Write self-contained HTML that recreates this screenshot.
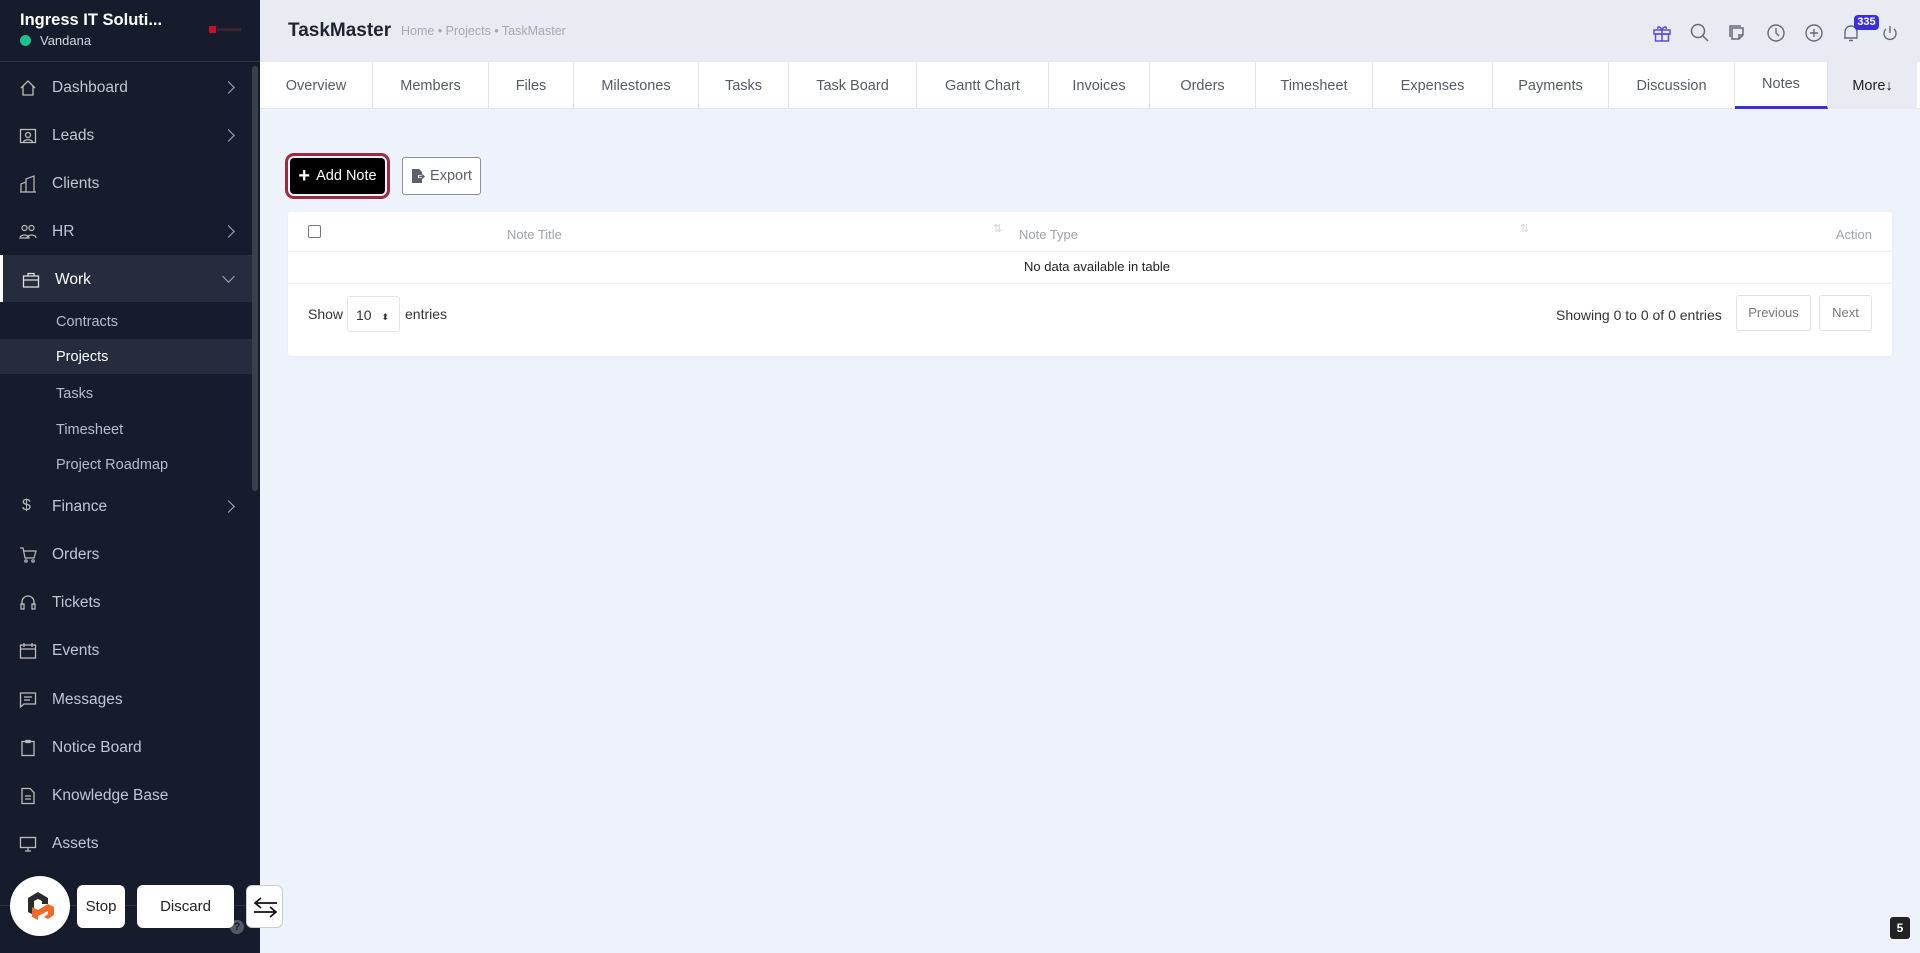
<!DOCTYPE html>
<html><head><meta charset="utf-8"><style>
*{box-sizing:border-box;margin:0;padding:0}
body{width:1920px;height:953px;overflow:hidden;background:#eef2fb;font-family:"Liberation Sans",Arial,sans-serif;position:relative}
.sb{position:absolute;left:0;top:0;width:260px;height:953px;background:#171c2d;color:#c9ccd6}
.sbh{position:absolute;left:0;top:0;width:260px;height:62px;border-bottom:1px solid #2c3244}
.mi{position:absolute;left:0;width:250px;height:48px;display:flex;align-items:center;font-size:15.5px;color:#c3c6d0}
.mi .ic{position:absolute;left:19px;width:18px;height:18px}
.mi .t{position:absolute;left:52px}
.mi .ch{position:absolute;left:224px;top:19px;width:9px;height:9px;border-right:1.6px solid #aab;border-top:1.6px solid #aab;transform:rotate(45deg)}
.sub{position:absolute;left:56px;font-size:14.5px;color:#b9bcc7}
.hdr{position:absolute;left:260px;top:0;right:0;height:62px;background:#e9ebf2}
.tabs{position:absolute;left:260px;top:62px;right:0;height:47px;background:#fff;border-bottom:1px solid #e3e6ee}
.tab{position:absolute;top:0;height:47px;display:flex;align-items:center;justify-content:center;font-size:14.5px;color:#555b66;border-right:1px solid #e3e6ee}
.card{position:absolute;left:288px;top:212px;width:1604px;height:144px;background:#fff;border-radius:3px;box-shadow:0 1px 2px rgba(0,0,0,.04)}
.hi{position:absolute;top:22px;width:22px;height:22px}
</style></head><body>
<div class="sb">
 <div class="sbh">
  <div style="position:absolute;left:20px;top:11px;font-size:16.5px;font-weight:bold;color:#fff">Ingress IT Soluti...</div>
  <div style="position:absolute;left:20px;top:35px;width:11px;height:11px;border-radius:50%;background:#1fbf8f"></div>
  <div style="position:absolute;left:40px;top:33px;font-size:13px;color:#d5d7de">Vandana</div>
  <div style="position:absolute;left:209px;top:26px;width:7px;height:7px;background:#c8102e"></div>
  <div style="position:absolute;left:217px;top:28px;width:24px;height:3px;background:#3a2230"></div>
 </div>
 <div style="position:absolute;left:252px;top:66px;width:6px;height:425px;background:#3a3f4c;border-radius:3px"></div>
 <div class="mi" style="top:64px"><svg class="ic" viewBox="0 0 18 18" fill="none" stroke="#bbb" stroke-width="1.3"><path d="M2 9L9 2l7 7M4 7v9h10V7"/></svg><span class="t">Dashboard</span><span class="ch"></span></div>
 <div class="mi" style="top:112px"><svg class="ic" viewBox="0 0 18 18" fill="none" stroke="#bbb" stroke-width="1.3"><rect x="1.5" y="2.5" width="15" height="13"/><circle cx="9" cy="8" r="2.5"/><path d="M4.5 15c1-3 8-3 9 0"/></svg><span class="t">Leads</span><span class="ch"></span></div>
 <div class="mi" style="top:160px"><svg class="ic" viewBox="0 0 18 18" fill="none" stroke="#bbb" stroke-width="1.2"><path d="M2 17V9l5-2v10M7 17V4l8-3v16M1 17h16"/></svg><span class="t">Clients</span></div>
 <div class="mi" style="top:208px"><svg class="ic" viewBox="0 0 18 18" fill="none" stroke="#bbb" stroke-width="1.2"><circle cx="5.5" cy="5" r="2.5"/><circle cx="12.5" cy="5" r="2.5"/><path d="M1 15c0-4 9-4 9 0zM8 15c0-4 9-4 9 0"/></svg><span class="t">HR</span><span class="ch"></span></div>
 <div style="position:absolute;left:0;top:255px;width:252px;height:47px;background:#262c3e"></div>
 <div style="position:absolute;left:0;top:255px;width:3px;height:47px;background:#fff"></div>
 <div class="mi" style="top:256px;height:47px;color:#fff"><svg class="ic" viewBox="0 0 18 18" fill="none" stroke="#ddd" stroke-width="1.3" style="left:22px"><rect x="1.5" y="5" width="15" height="11"/><path d="M6 5V2.5h6V5M1.5 9h15"/></svg><span class="t" style="left:55px">Work</span><span class="ch" style="transform:rotate(135deg);top:16px"></span></div>
 <div style="position:absolute;left:0;top:339px;width:252px;height:35px;background:#262c3e"></div>
 <div class="sub" style="top:314px">Contracts</div>
 <div class="sub" style="top:349px;color:#fff">Projects</div>
 <div class="sub" style="top:386px">Tasks</div>
 <div class="sub" style="top:422px">Timesheet</div>
 <div class="sub" style="top:457px">Project Roadmap</div>
 <div class="mi" style="top:483px"><span class="ic" style="font-size:16px;color:#bbb;left:22px;top:14px">$</span><span class="t">Finance</span><span class="ch"></span></div>
 <div class="mi" style="top:531px"><svg class="ic" viewBox="0 0 18 18" fill="none" stroke="#bbb" stroke-width="1.2"><path d="M1 2h3l2 10h9l2-7H5"/><circle cx="7" cy="15" r="1.2"/><circle cx="14" cy="15" r="1.2"/></svg><span class="t">Orders</span></div>
 <div class="mi" style="top:579px"><svg class="ic" viewBox="0 0 18 18" fill="none" stroke="#bbb" stroke-width="1.3"><path d="M3 11V8a6 6 0 0112 0v3"/><rect x="2" y="10" width="3" height="5"/><rect x="13" y="10" width="3" height="5"/></svg><span class="t">Tickets</span></div>
 <div class="mi" style="top:627px"><svg class="ic" viewBox="0 0 18 18" fill="none" stroke="#bbb" stroke-width="1.3"><rect x="1.5" y="3" width="15" height="13"/><path d="M1.5 7h15M5 1v4M13 1v4"/></svg><span class="t">Events</span></div>
 <div class="mi" style="top:676px"><svg class="ic" viewBox="0 0 18 18" fill="none" stroke="#bbb" stroke-width="1.3"><path d="M1.5 2h15v11H5l-3.5 3z"/><path d="M5 6h8M5 9h6"/></svg><span class="t">Messages</span></div>
 <div class="mi" style="top:724px"><svg class="ic" viewBox="0 0 18 18" fill="none" stroke="#bbb" stroke-width="1.3"><rect x="3" y="2.5" width="12" height="14"/><path d="M7 1.5h4v2H7z"/></svg><span class="t">Notice Board</span></div>
 <div class="mi" style="top:772px"><svg class="ic" viewBox="0 0 18 18" fill="none" stroke="#bbb" stroke-width="1.3"><path d="M3 1.5h8l4 4v11H3z"/><path d="M6 9h6M6 12h6"/></svg><span class="t">Knowledge Base</span></div>
 <div class="mi" style="top:820px"><svg class="ic" viewBox="0 0 18 18" fill="none" stroke="#bbb" stroke-width="1.3"><rect x="1.5" y="2.5" width="15" height="10"/><path d="M6 16h6M9 12.5V16"/></svg><span class="t">Assets</span></div>
 <div style="position:absolute;left:0;top:905px;width:252px;height:1px;background:#2c3244"></div>
 <div style="position:absolute;left:230px;top:920px;width:14px;height:14px;border-radius:50%;background:#555a66;color:#171c2d;font-size:11px;font-weight:bold;text-align:center;line-height:14px">?</div>
</div>

<div class="hdr">
 <div style="position:absolute;left:28px;top:20px;font-size:19px;font-weight:bold;color:#1f2430">TaskMaster</div>
 <div style="position:absolute;left:141px;top:24px;font-size:12.5px;color:#a3a8b4">Home • Projects • TaskMaster</div>
</div>
<svg class="hi" style="left:1651px" viewBox="0 0 22 22" fill="none" stroke="#5b4bd6" stroke-width="1.5"><rect x="3" y="8" width="16" height="4"/><rect x="4.5" y="12" width="13" height="7"/><path d="M11 8v11M11 8C9 4 6 4 7 7M11 8c2-4 5-4 4-1"/></svg>
<svg class="hi" style="left:1689px" viewBox="0 0 22 22" fill="none" stroke="#666b77" stroke-width="1.5"><circle cx="9" cy="9" r="6.5"/><path d="M14 14l5 5"/></svg>
<svg class="hi" style="left:1727px" viewBox="0 0 22 22" fill="none" stroke="#666b77" stroke-width="1.5"><path d="M5 6h11v7l-4 4H5z"/><path d="M3 15V4h11M12 17v-4h4"/></svg>
<svg class="hi" style="left:1765px" viewBox="0 0 22 22" fill="none" stroke="#666b77" stroke-width="1.4"><circle cx="11" cy="11" r="8"/><path d="M11 6v5l3 3"/></svg>
<svg class="hi" style="left:1803px" viewBox="0 0 22 22" fill="none" stroke="#666b77" stroke-width="1.4"><circle cx="11" cy="11" r="8"/><path d="M11 7v8M7 11h8"/></svg>
<svg class="hi" style="left:1840px" viewBox="0 0 22 22" fill="none" stroke="#666b77" stroke-width="1.4"><path d="M5 16V10a6 6 0 0112 0v6H4M9 18.5h4"/></svg>
<div style="position:absolute;left:1854px;top:15px;width:25px;height:15px;background:#3b2fd6;border-radius:4px;color:#fff;font-size:11px;font-weight:bold;text-align:center;line-height:15px">335</div>
<svg class="hi" style="left:1879px" viewBox="0 0 22 22" fill="none" stroke="#666b77" stroke-width="1.4"><path d="M7 7a6 6 0 108 0M11 4v7"/></svg>

<div class="tabs">
 <div class="tab" style="left:0;width:113px">Overview</div>
 <div class="tab" style="left:113px;width:116px">Members</div>
 <div class="tab" style="left:229px;width:85px">Files</div>
 <div class="tab" style="left:314px;width:125px">Milestones</div>
 <div class="tab" style="left:439px;width:90px">Tasks</div>
 <div class="tab" style="left:529px;width:128px">Task Board</div>
 <div class="tab" style="left:657px;width:132px">Gantt Chart</div>
 <div class="tab" style="left:789px;width:101px">Invoices</div>
 <div class="tab" style="left:890px;width:106px">Orders</div>
 <div class="tab" style="left:996px;width:117px">Timesheet</div>
 <div class="tab" style="left:1113px;width:120px">Expenses</div>
 <div class="tab" style="left:1233px;width:116px">Payments</div>
 <div class="tab" style="left:1349px;width:126px">Discussion</div>
 <div class="tab" style="left:1475px;width:93px;border-bottom:3px solid #3b2fd6">Notes</div>
 <div class="tab" style="left:1568px;width:89px;background:#e9ebf2;color:#222;border:none">More↓</div>
</div>

<div style="position:absolute;left:285px;top:153px;width:105px;height:46px;border:3px solid #9c2a40;border-radius:9px;padding:2px"><div style="width:100%;height:100%;background:#000;border-radius:4px;color:#fff;font-size:14.5px;display:flex;align-items:center;justify-content:center"><span style="font-size:20px;font-weight:bold;margin-right:6px;line-height:1">+</span>Add Note</div></div>
<div style="position:absolute;left:402px;top:157px;width:79px;height:38px;border:1px solid #8a8f99;border-radius:3px;background:#fff;color:#5b606b;font-size:14.5px;display:flex;align-items:center;justify-content:center"><svg width="15" height="16" viewBox="0 0 15 16" style="margin-right:4px"><path d="M1 1h7l3 3v3H7v3h4v5H1z" fill="#5b606b"/><path d="M8 8.5h5M11 6.5l2 2-2 2" stroke="#5b606b" stroke-width="1.4" fill="none"/></svg>Export</div>

<div class="card">
 <div style="position:absolute;left:20px;top:13px;width:13px;height:13px;border:1px solid #777;border-radius:2px"></div>
 <div style="position:absolute;left:219px;top:15px;font-size:13px;color:#9ea3ad">Note Title</div>
 <div style="position:absolute;left:705px;top:10px;font-size:11px;color:#d0d3da">⇅</div>
 <div style="position:absolute;left:731px;top:15px;font-size:13px;color:#9ea3ad">Note Type</div>
 <div style="position:absolute;left:1232px;top:10px;font-size:11px;color:#d0d3da">⇅</div>
 <div style="position:absolute;right:20px;top:15px;font-size:13px;color:#9ea3ad">Action</div>
 <div style="position:absolute;left:0;right:0;top:39px;height:1px;background:#eceef2"></div>
 <div style="position:absolute;left:736px;top:47px;font-size:13px;color:#222">No data available in table</div>
 <div style="position:absolute;left:0;right:0;top:71px;height:1px;background:#eceef2"></div>
 <div style="position:absolute;left:20px;top:94px;font-size:14px;color:#333">Show</div>
 <div style="position:absolute;left:59px;top:84px;width:53px;height:36px;border:1px solid #e2e4e9;border-radius:3px;font-size:14px;color:#333;padding:10px 0 0 8px">10 <span style="font-size:9px;margin-left:6px">⬍</span></div>
 <div style="position:absolute;left:117px;top:94px;font-size:14px;color:#333">entries</div>
 <div style="position:absolute;left:1268px;top:95px;font-size:14px;color:#333">Showing 0 to 0 of 0 entries</div>
 <div style="position:absolute;left:1448px;top:83px;width:75px;height:36px;border:1px solid #dfe1e6;border-radius:3px;font-size:13px;color:#777;text-align:center;line-height:34px">Previous</div>
 <div style="position:absolute;left:1531px;top:83px;width:53px;height:36px;border:1px solid #dfe1e6;border-radius:3px;font-size:13px;color:#777;text-align:center;line-height:34px">Next</div>
</div>

<div style="position:absolute;left:10px;top:876px;width:60px;height:60px;border-radius:50%;background:#fff;box-shadow:0 0 3px rgba(0,0,0,.3)"><svg width="60" height="60" viewBox="0 0 60 60"><path d="M18 22l10-6 10 6v6h-6v-3l-4-2-4 2v14l-6-3z" fill="#2b2b2b"/><path d="M28 44l-6-3 0-10 6 3 10-6 6 3v8l-6 4-4-2 4-3v-3l-4 2-6 3z" fill="#f26a2a"/></svg></div>
<div style="position:absolute;left:77px;top:885px;width:48px;height:43px;background:#fff;border-radius:6px;font-size:15px;color:#222;text-align:center;line-height:43px">Stop</div>
<div style="position:absolute;left:137px;top:885px;width:97px;height:43px;background:#fff;border-radius:6px;font-size:15px;color:#222;text-align:center;line-height:43px">Discard</div>
<div style="position:absolute;left:246px;top:885px;width:37px;height:43px;background:#fff;border-radius:6px;border:1px solid #ccc"><svg width="37" height="43" viewBox="0 0 37 43" fill="none" stroke="#111" stroke-width="1.7"><path d="M8 17h22M14 12l-6 5 6 5M29 26H7M23 21l6 5-6 5"/></svg></div>
<div style="position:absolute;left:1890px;top:917px;width:20px;height:22px;background:#222;border-radius:3px;color:#fff;font-size:12px;font-weight:bold;text-align:center;line-height:22px">5</div>
</body></html>
